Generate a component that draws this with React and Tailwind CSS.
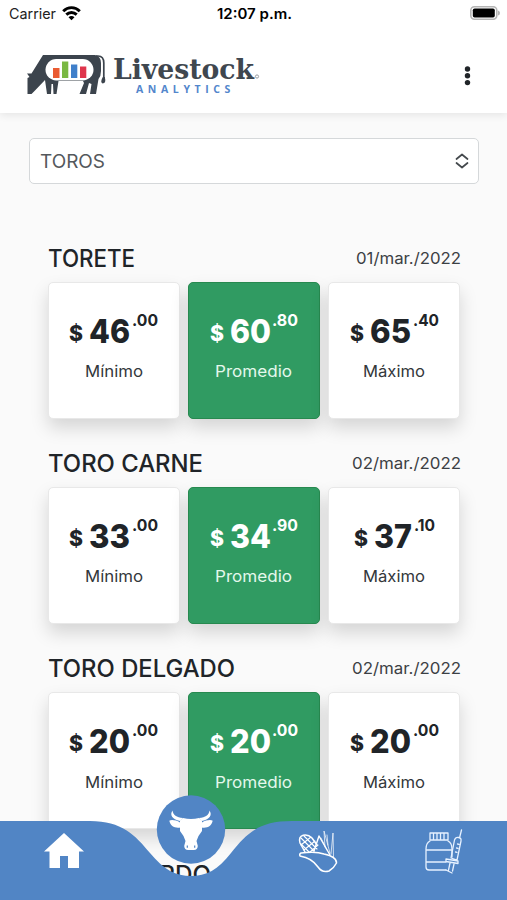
const groups = [
  { name: "TORETE", width: 87, date: "01/mar./2022", dateWidth: 105, prices: ["46.00", "60.80", "65.40"] },
  { name: "TORO CARNE", width: 155, date: "02/mar./2022", dateWidth: 109, prices: ["33.00", "34.90", "37.10"] },
  { name: "TORO DELGADO", width: 187, date: "02/mar./2022", dateWidth: 109, prices: ["20.00", "20.00", "20.00"] },
  { name: "TORO GORDO", width: 163, date: "02/mar./2022", dateWidth: 109, prices: [] },
];

const kinds = [
  { label: "Mínimo", width: 58 },
  { label: "Promedio", width: 77 },
  { label: "Máximo", width: 62 },
];

// A single line of text fitted to a fixed advance width.
function FitText({ children, width, size, weight = 400, className = "" }) {
  return (
    <svg width={width} height={size * 1.4} className={`block overflow-visible ${className}`}>
      <text x="0" y={size * 1.04} fontSize={size} fontWeight={weight} fill="currentColor" textLength={width} lengthAdjust="spacingAndGlyphs">
        {children}
      </text>
    </svg>
  );
}

function StatusBar() {
  return (
    <div className="relative flex h-7 items-center justify-between pl-[9px] pr-[7px] text-black">
      <div className="flex items-center gap-[6px]">
        <FitText width={47} size={14.5} className="text-[#222]">Carrier</FitText>
        <svg width="19" height="15" viewBox="0 0 19 15" fill="none" stroke="black" strokeWidth="2.9">
          <path d="M1.2 5.2C6 .4 13 .4 17.8 5.2M4.3 8.6C7.3 5.7 11.7 5.7 14.7 8.600" />
          <path d="M9.500 14.200L6.500 11.200C8.200 9.700 10.800 9.700 12.500 11.200Z" fill="black" stroke="none" />
        </svg>
      </div>
      <FitText width={75} size={14.5} weight={600} className="absolute left-[217px] top-[4px]">12:07 p.m.</FitText>
      <svg width="30" height="14" viewBox="0 0 30 14" className="-mt-[2px]">
        <rect x=".8" y=".8" width="26" height="12.400" rx="3.600" fill="white" stroke="#b5b5b5" strokeWidth="1.600" />
        <rect x="2.800" y="2.500" width="22" height="9" rx="1.800" fill="black" />
        <path d="M28 4.500Q30 5 30 7T28 9.500Z" fill="#b5b5b5" />
      </svg>
    </div>
  );
}

function Logo() {
  return (
    <svg width="240" height="50" viewBox="24 48 240 50" className="block">
      <path d="M96 56H98Q103.800 56 103.800 63V79" fill="none" stroke="#3c444d" strokeWidth="1.700" />
      <path d="M43 55H95Q101 56.500 101 63V71Q101 76 98.500 79L96 94H90L91.500 84L89 83L86 94H79.500L84 83L83 81H58.500L56.500 94H53.500L53 84H51.500L51 94H47L45 80L35 90.500L31.500 94H27.500V78L29.500 77L27 73.500L31.500 73.500Z" fill="#3c444d" />
      <path d="M102.800 77Q99.800 82 102.500 83.500Q106.500 83.500 104.800 77Z" fill="#3c444d" />
      <rect x="45.500" y="59" width="48" height="21.500" rx="10.700" fill="white" />
      <path d="M53 68h6.500v10H53z" fill="#ea5b32" />
      <path d="M62 61.500h6.300V78H62z" fill="#7ab843" />
      <path d="M71 64.500h6.300V78H71z" fill="#3f7fca" />
      <path d="M80 66.500h6.300V78H80z" fill="#df354c" />
      <text x="113" y="79" fontFamily="DejaVu Serif Condensed, DejaVu Serif, serif" fontSize="27" fontWeight="700" fill="#3f474f" textLength="141" lengthAdjust="spacingAndGlyphs">Livestock</text>
      <circle cx="257" cy="76.500" r="1.600" fill="none" stroke="#9a9ea2" strokeWidth="1" />
      <text x="136" y="93.300" fontFamily="Open Sans, sans-serif" fontSize="9.800" fontWeight="700" fill="#5386cc" letterSpacing="4.300" textLength="99" lengthAdjust="spacingAndGlyphs">ANALYTICS</text>
    </svg>
  );
}

function PriceCard({ price, kind, active }) {
  const [whole, cents] = price.split(".");
  const narrow = whole === "37";
  return (
    <div className={`flex h-[137px] flex-col items-center rounded-[5px] border pt-[28px] shadow-[0_9px_18px_rgba(0,0,0,0.15)] ${active ? "border-[#27894f] bg-[#309b62] text-white" : "border-[#e8e8e8] bg-white text-[#202428]"}`}>
      <div className="flex h-[47px] items-start">
        <FitText width={14} size={22} weight={800} className="mt-[7px]">$</FitText>
        <FitText width={narrow ? 38 : 41} size={32.5} weight={800} className="-mt-[2px] ml-[6px]">{whole}</FitText>
        <FitText width={narrow ? 21 : 26} size={16.5} weight={700} className="-mt-[2px] ml-[1.500px]">{`.${cents}`}</FitText>
      </div>
      <FitText width={kind.width} size={16} className={`mt-[2.500px] ${active ? "text-[#e4f8ec]" : "text-[#33373b]"}`}>{kind.label}</FitText>
    </div>
  );
}

function PriceGroup({ group }) {
  return (
    <section className="h-[205.300px]">
      <div className="flex h-[48px] items-center justify-between">
        <FitText width={group.width} size={24} weight={500} className="mt-[2px] text-[#202428]">{group.name}</FitText>
        <FitText width={group.dateWidth} size={16} className="mt-px text-[#3c4044]">{group.date}</FitText>
      </div>
      <div className="grid grid-cols-3 gap-2">
        {group.prices.map((p, i) => (
          <PriceCard key={i} price={p} kind={kinds[i]} active={i === 1} />
        ))}
      </div>
    </section>
  );
}

function BottomNav() {
  return (
    <nav className="absolute bottom-0 left-0 h-[106px] w-full">
      <svg width="507" height="106" viewBox="0 794 507 106" className="block">
        <path d="M0 821H90C122 821 135 835 150 853C164 870 176 876 191 876S218 870 231 853C247 833 259 821 292 821H507V900H0Z" fill="#5185c5" />
        <circle cx="191" cy="829.500" r="34.200" fill="#5185c5" />
        <path d="M64 833L84 851.500H79V868H68V856H60V868H49.500V851.500H44Z" fill="white" />
        <g fill="white">
          <path d="M172.500 810.500C169.500 815 172 819 180 821L183 818C176.500 817.500 173 815 172.500 810.500ZM209.500 810.500C212.500 815 210 819 202 821L199 818C205.500 817.500 209 815 209.500 810.500Z" />
          <path d="M180 822.500C176 820 171 819.500 169.300 820.800C170.500 826 174.500 828.500 180.500 827.500ZM202 822.500C206 820 211 819.500 212.700 820.800C211.500 826 207.500 828.500 201.500 827.500Z" />
          <path d="M180 820.500L183 818Q191 820 199 818L202 820.500V831L198.500 836L196.500 841L197.800 846Q197.500 850 194 850H188Q184.500 850 184.200 846L185.500 841L183.500 836L180 831Z" />
        </g>
        <path d="M187.300 845.500v2.200M194.700 845.500v2.200" stroke="#5185c5" strokeWidth="1.200" />
        <g fill="none" stroke="white" strokeWidth="1.500" strokeLinejoin="round" strokeLinecap="round">
          <path d="M305 852L300 843C297.500 834 307 833 312 838L317 845" />
          <path d="M301 838L314 851M304 836L317 849M301 844L309 852M311 837L301 845M315 841L304 850M318 845L310 852" strokeWidth="1.100" />
          <path d="M314 851L319 836L330 855" strokeWidth="1.400" />
          <path d="M325 847L324 831L330 853M331 854L333 833L333.500 858M328 845L327 835M321 838L327 850" strokeWidth=".9" opacity=".8" />
          <path d="M301 853Q316 851 324 854Q337 857 336.500 863Q334 868 329 871Q322 873 318 867Q312 858 300 856Q299 854 301 853Z" />
        </g>
        <g fill="none" stroke="#e6f1ff" strokeWidth="1.300" strokeLinejoin="round" strokeLinecap="round">
          <path d="M430 833H448V840H430ZM433.500 833V840M437 833V840M440.500 833V840M444 833V840" />
          <path d="M430 841Q426 843 426 849V867Q426 870 429 870H446M448 841Q452 843 452 849V857M426 850H451M426 862H446" />
          <path d="M461.500 830L459.500 838M454.500 840Q455.500 837 458.500 837.500T461 841L457 860L451 858ZM446 859L458 861V863.500L446 861.500ZM450 863L448.500 870M454 864L452.500 871M446 870L452 873M457.500 844l1.500 .4M456.500 848l1.500 .4M455.500 852l1.500 .4" />
        </g>
      </svg>
    </nav>
  );
}

export default function App() {
  return (
    <div className="relative h-[900px] w-[507px] overflow-hidden bg-[#fafafa] font-['Inter',sans-serif]">
      <header className="relative h-[113px] bg-white shadow-[0_2px_8px_rgba(0,0,0,0.09)]">
        <StatusBar />
        <div className="flex items-center justify-between pl-6 pr-[36px] pt-5">
          <Logo />
          <svg width="7" height="20" viewBox="0 0 7 20" fill="#202428" className="mt-[5px]">
            <circle cx="3.500" cy="3" r="2.700" />
            <circle cx="3.500" cy="9.800" r="2.700" />
            <circle cx="3.500" cy="16.600" r="2.700" />
          </svg>
        </div>
      </header>
      <main>
        <div className="mx-[29px] mt-[25px] flex h-[46px] w-[450px] items-center justify-between rounded-[5px] border border-[#d5d8da] bg-white pl-[10px] pr-[9px] text-[#54585c]">
          <FitText width={65} size={18.5} className="mt-px">TOROS</FitText>
          <svg width="14" height="16" viewBox="0 0 14 16" fill="none" stroke="#44494d" strokeWidth="1.700" strokeLinecap="round" strokeLinejoin="round">
            <path d="M1.500 6L7 1.500L12.500 6M1.500 10L7 14.500L12.500 10" />
          </svg>
        </div>
        <div className="ml-[47.500px] mt-[49.500px] w-[413px]">
          {groups.map((g) => (
            <PriceGroup key={g.name} group={g} />
          ))}
        </div>
      </main>
      <BottomNav />
    </div>
  );
}
